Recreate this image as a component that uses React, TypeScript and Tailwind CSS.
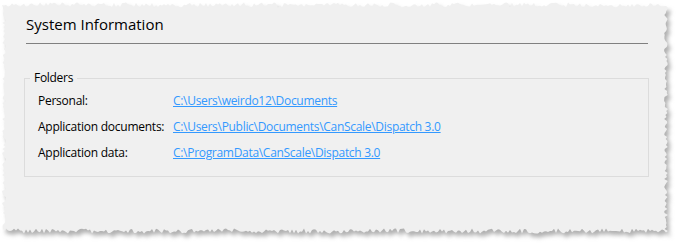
import React from 'react';

// seeded random so the torn edge is the same every render
function rng(seed: number) {
  let a = seed;
  return () => {
    a = (a + 0x6d2b79f5) | 0;
    let t = Math.imul(a ^ (a >>> 15), 1 | a);
    t = (t + Math.imul(t ^ (t >>> 7), 61 | t)) ^ t;
    return ((t ^ (t >>> 14)) >>> 0) / 4294967296;
  };
}

function tornPath() {
  const r = rng(42);
  const j = (amp: number) => Math.round((r() * 2 - 1) * amp * 10) / 10;
  const pts: string[] = [];
  const left = 4, right = 666, top = 5, bottom = 231;
  for (let x = left; x <= right; x += 2) pts.push(`${x},${top + j(2.5)}`);
  for (let y = top; y <= bottom; y += 2) pts.push(`${right + j(2)},${y}`);
  for (let x = right; x >= left; x -= 2) pts.push(`${x},${bottom + j(2.5)}`);
  for (let y = bottom; y >= top; y -= 2) pts.push(`${left + j(2)},${y}`);
  return pts.join(' ');
}

function Paper() {
  const pts = tornPath();
  return (
    <svg className="absolute inset-0" width={683} height={247}>
      <defs>
        <filter id="blur" x="-5%" y="-5%" width="110%" height="110%">
          <feGaussianBlur stdDeviation="2" />
        </filter>
      </defs>
      <polygon points={pts} fill="#b0b0b0" transform="translate(3,4)" filter="url(#blur)" />
      <polygon points={pts} fill="#f0f0f0" />
    </svg>
  );
}

const folders = [
  { label: 'Personal:', path: 'C:\\Users\\weirdo12\\Documents' },
  { label: 'Application documents:', path: 'C:\\Users\\Public\\Documents\\CanScale\\Dispatch 3.0' },
  { label: 'Application data:', path: 'C:\\ProgramData\\CanScale\\Dispatch 3.0' },
];

export default function App() {
  return (
    <div className="relative w-[683px] h-[247px] bg-white overflow-hidden font-['Open_Sans',sans-serif] text-black">
      <Paper />
      <div className="relative pl-[26px] pt-[14px] w-[648px]">
        <h1 className="text-[15px] leading-[20px]">System Information</h1>
        <div className="mt-[9px] h-px bg-[#808080]" />

        {/* Folders group */}
        <fieldset className="mt-[26px] -ml-[2px] w-[625px] border border-[#dcdcdc]">
          <legend className="ml-[5px] px-[4px] text-[12px] leading-[16px] tracking-[-0.3px]">Folders</legend>
          <div className="pl-[13px] pt-[2px] pb-[10px]">
            {folders.map((f) => (
              <div key={f.label} className="flex items-center h-[26px] text-[12px]">
                <span className="w-[135px] tracking-[-0.25px]">{f.label}</span>
                <a href="#" className="text-[#3399ff] underline tracking-[-0.3px]">
                  {f.path}
                </a>
              </div>
            ))}
          </div>
        </fieldset>
      </div>
    </div>
  );
}
